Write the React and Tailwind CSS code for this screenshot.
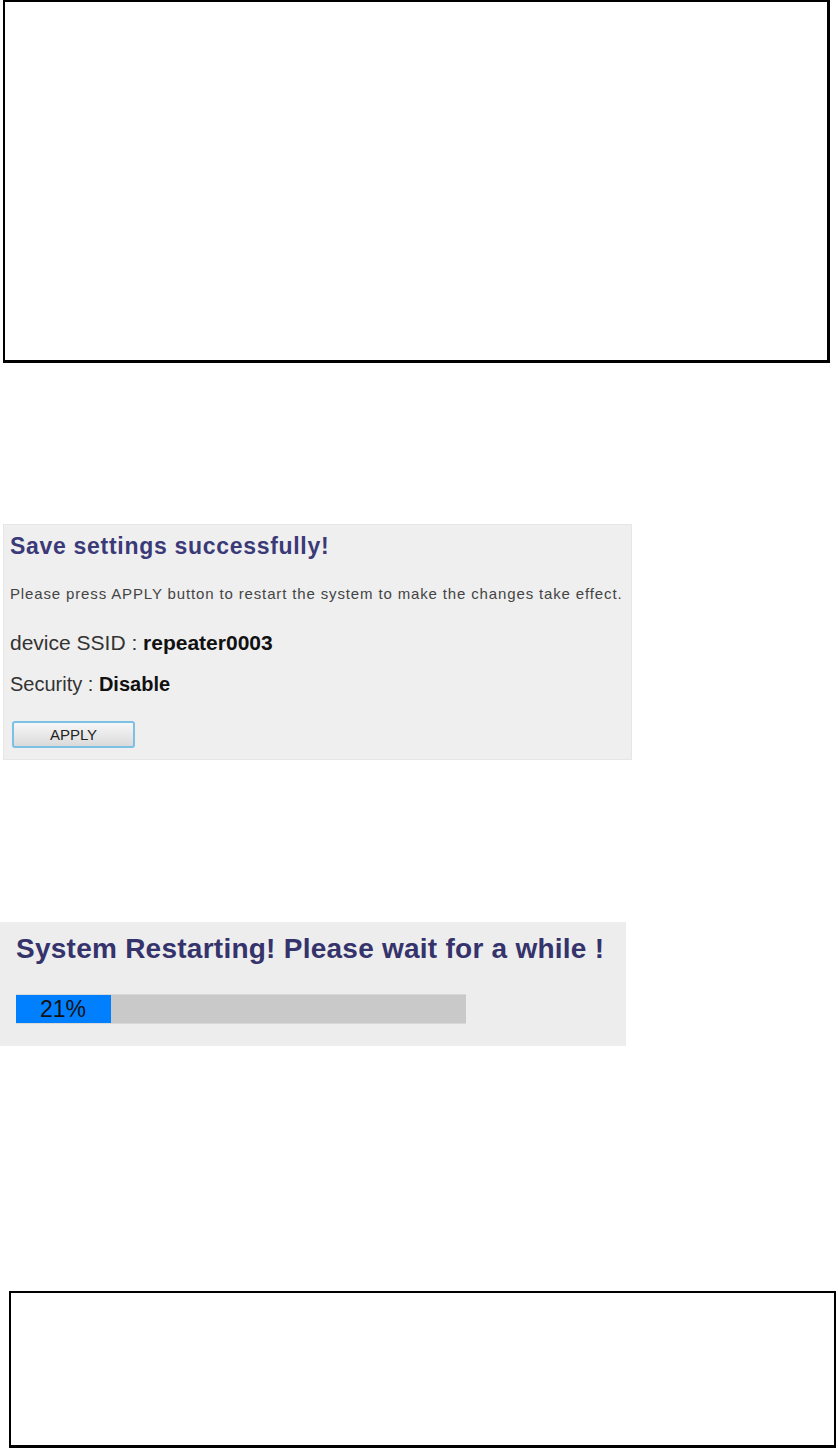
import React from "react";

function SavePanel() {
  return (
    <div className="ml-[3px] mt-[161px] w-[629px] h-[236px] bg-[#efefef] border border-[#e6e6e6] pl-[6px] pt-[8px]">
      <h2 className="text-[23px] leading-[26px] font-bold text-[#3b3a78] tracking-[0.7px]">
        Save settings successfully!
      </h2>
      <p className="mt-[26px] text-[15px] leading-[18px] text-[#444] tracking-[0.86px]">
        Please press APPLY button to restart the system to make the changes take effect.
      </p>
      <p className="mt-[28px] text-[21px] leading-[24px] text-[#333]">
        device SSID :{" "}
        <span className="font-bold text-[#111]">repeater0003</span>
      </p>
      <p className="mt-[17px] text-[20px] leading-[24px] text-[#333]">
        Security : <span className="font-bold text-[#111]">Disable</span>
      </p>
      <button className="mt-[25px] ml-[2px] w-[123px] h-[27px] rounded-[3px] border-2 border-[#7cc0e4] bg-gradient-to-b from-[#f7f7f7] to-[#dadada] text-[15px] text-[#222] leading-none">
        APPLY
      </button>
    </div>
  );
}

function RestartPanel() {
  const percent = 21;
  return (
    <div className="mt-[162px] w-[626px] h-[124px] bg-[#ededed] pl-[16px] pt-[11px]">
      <h2 className="text-[28px] leading-[32px] font-bold text-[#35336b] tracking-[0.25px]">
        System Restarting! Please wait for a while !
      </h2>
      <div className="mt-[29px] w-[450px] h-[30px] bg-[#c9c9c9] border-y border-[#d8d8d8] flex">
        <div className="h-full bg-[#0080ff] flex items-center pl-[24px]" style={{ width: (percent / 100) * 450 }}>
          <span className="text-[23px] text-[#111]">{percent}%</span>
        </div>
      </div>
    </div>
  );
}

export default function App() {
  return (
    <div className="w-[838px] h-[1449px] bg-white overflow-hidden font-['Liberation_Sans',Arial,sans-serif]">
      <div className="ml-[3px] w-[827px] h-[363px] border-2 border-r-[3px] border-b-[3px] border-black" />
      <SavePanel />
      <RestartPanel />
      <div className="mt-[245px] ml-[9px] w-[827px] h-[157px] border-2 border-b-[3px] border-black" />
    </div>
  );
}
